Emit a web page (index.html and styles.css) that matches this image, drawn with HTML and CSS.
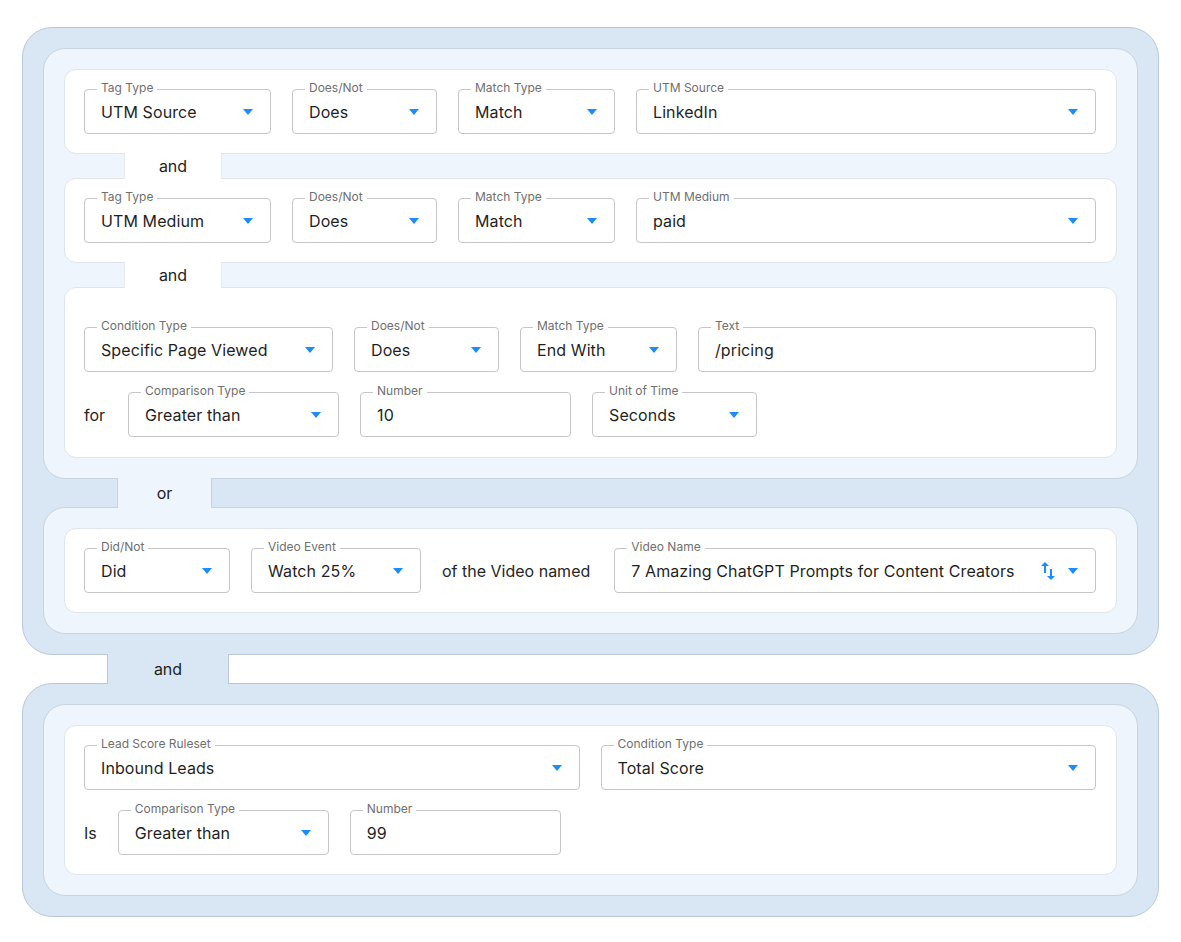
FILE: index.html
```html
<!DOCTYPE html>
<html lang="en">
<head>
<meta charset="utf-8">
<title>Audience Rules</title>
<link rel="stylesheet" href="styles.css">
</head>
<body>
<div class="flow">

  <section class="group">
    <div class="panel">
      <div class="card">
        <div class="row">
          <div class="field w-187"><span class="label">Tag Type</span><span class="value">UTM Source</span><span class="caret"></span></div>
          <div class="field w-145"><span class="label">Does/Not</span><span class="value">Does</span><span class="caret"></span></div>
          <div class="field w-157"><span class="label">Match Type</span><span class="value">Match</span><span class="caret"></span></div>
          <div class="field grow"><span class="label">UTM Source</span><span class="value">LinkedIn</span><span class="caret"></span></div>
        </div>
      </div>
      <div class="link link-card"><span class="tab">and</span></div>
      <div class="card">
        <div class="row">
          <div class="field w-187"><span class="label">Tag Type</span><span class="value">UTM Medium</span><span class="caret"></span></div>
          <div class="field w-145"><span class="label">Does/Not</span><span class="value">Does</span><span class="caret"></span></div>
          <div class="field w-157"><span class="label">Match Type</span><span class="value">Match</span><span class="caret"></span></div>
          <div class="field grow"><span class="label">UTM Medium</span><span class="value">paid</span><span class="caret"></span></div>
        </div>
      </div>
      <div class="link link-card"><span class="tab">and</span></div>
      <div class="card card-roomy">
        <div class="stack">
          <div class="row">
            <div class="field w-249"><span class="label">Condition Type</span><span class="value">Specific Page Viewed</span><span class="caret"></span></div>
            <div class="field w-145"><span class="label">Does/Not</span><span class="value">Does</span><span class="caret"></span></div>
            <div class="field w-157"><span class="label">Match Type</span><span class="value">End With</span><span class="caret"></span></div>
            <div class="field grow"><span class="label">Text</span><span class="value">/pricing</span></div>
          </div>
          <div class="row">
            <span class="word word-for">for</span>
            <div class="field w-211"><span class="label">Comparison Type</span><span class="value">Greater than</span><span class="caret"></span></div>
            <div class="field w-211"><span class="label">Number</span><span class="value">10</span></div>
            <div class="field w-165"><span class="label">Unit of Time</span><span class="value">Seconds</span><span class="caret"></span></div>
          </div>
        </div>
      </div>
    </div>

    <div class="link link-panel"><span class="tab">or</span></div>

    <div class="panel">
      <div class="card">
        <div class="row">
          <div class="field w-146"><span class="label">Did/Not</span><span class="value">Did</span><span class="caret"></span></div>
          <div class="field w-170"><span class="label">Video Event</span><span class="value">Watch 25%</span><span class="caret"></span></div>
          <span class="word word-named">of the Video named</span>
          <div class="field grow"><span class="label">Video Name</span><span class="value">7 Amazing ChatGPT Prompts for Content Creators</span>
            <svg class="sort" viewBox="0 0 24 24" width="24" height="24" aria-hidden="true"><path d="M16 17.01V10h-2v7.01h-3L15 21l4-3.99h-3zM9 3L5 6.99h3V14h2V6.99h3L9 3z"/></svg>
            <span class="caret"></span></div>
        </div>
      </div>
    </div>
  </section>

  <div class="link link-group"><span class="tab">and</span></div>

  <section class="group">
    <div class="panel">
      <div class="card">
        <div class="stack">
          <div class="row">
            <div class="field grow"><span class="label">Lead Score Ruleset</span><span class="value">Inbound Leads</span><span class="caret"></span></div>
            <div class="field grow"><span class="label">Condition Type</span><span class="value">Total Score</span><span class="caret"></span></div>
          </div>
          <div class="row">
            <span class="word">Is</span>
            <div class="field w-211"><span class="label">Comparison Type</span><span class="value">Greater than</span><span class="caret"></span></div>
            <div class="field w-211"><span class="label">Number</span><span class="value">99</span></div>
          </div>
        </div>
      </div>
    </div>
  </section>

</div>
</body>
</html>
```

FILE: styles.css
```css
* {
  box-sizing: border-box;
}

body {
  margin: 0;
  padding: 27px 22px;
  background: #ffffff;
  font-family: "Inter", "Liberation Sans", sans-serif;
  color: #1f1f1f;
}

/* outer rule group */
.group {
  background: #d9e6f4;
  border: 1px solid #b9c8d8;
  border-radius: 30px;
  padding: 20px;
}

/* panel of conditions joined by "and" */
.panel {
  background: #eef5fc;
  border: 1px solid #c7d4e1;
  border-radius: 22px;
  padding: 20px;
}

/* single condition card */
.card {
  background: #ffffff;
  border: 1px solid #dfe5eb;
  border-radius: 12px;
  padding: 19px 20px 19px 19px;
}

.card-roomy {
  padding-top: 39px;
  padding-bottom: 20px;
}

.stack {
  display: flex;
  flex-direction: column;
  gap: 20px;
}

.row {
  display: flex;
  align-items: center;
  gap: 21px;
}

.word {
  font-size: 16px;
  color: #262626;
  white-space: nowrap;
}

.word-for {
  margin-right: 2px;
}

.word-named {
  margin-right: 3px;
}

/* outlined select / input */
.field {
  position: relative;
  flex: none;
  height: 45px;
  border: 1px solid #c6c6c6;
  border-radius: 4px;
  display: flex;
  align-items: center;
  padding: 0 17px 0 16px;
}

.field.grow {
  flex: 1 1 0;
  min-width: 0;
}

.w-145 { width: 145px; }
.w-146 { width: 146px; }
.w-157 { width: 157px; }
.w-165 { width: 165px; }
.w-170 { width: 170px; }
.w-187 { width: 187px; }
.w-211 { width: 211px; }
.w-249 { width: 249px; }

.label {
  position: absolute;
  top: -10px;
  left: 12px;
  padding: 0 4px;
  background: #ffffff;
  font-size: 12px;
  line-height: 16px;
  color: #6f6f6f;
  white-space: nowrap;
}

.value {
  font-size: 16px;
  color: #1f1f1f;
  white-space: nowrap;
  letter-spacing: 0.1px;
}

.caret {
  margin-left: auto;
  width: 0;
  height: 0;
  border-left: 5px solid transparent;
  border-right: 5px solid transparent;
  border-top: 6px solid #1a8cff;
}

.sort {
  flex: none;
  margin-left: auto;
  margin-right: 8px;
  fill: #1a8cff;
}

.sort + .caret {
  margin-left: 0;
}

/* connectors between cards, panels and groups */
.link {
  display: flex;
}

.link-card { height: 24px; }
.link-panel { height: 28px; }
.link-group { height: 28px; }

.tab {
  position: relative;
  z-index: 1;
  display: flex;
  align-items: center;
  justify-content: center;
  margin: -1px 0;
  font-size: 16px;
  color: #222222;
}

.link-card .tab {
  margin-left: 60px;
  width: 98px;
  background: #ffffff;
  border-left: 1px solid #e6ebf0;
  border-right: 1px solid #e6ebf0;
}

.link-panel .tab {
  margin-left: 74px;
  width: 95px;
  background: #eef5fc;
  border-left: 1px solid #c7d4e1;
  border-right: 1px solid #c7d4e1;
}

.link-group .tab {
  margin-left: 85px;
  width: 122px;
  background: #d9e6f4;
  border-left: 1px solid #b9c8d8;
  border-right: 1px solid #b9c8d8;
}
```
